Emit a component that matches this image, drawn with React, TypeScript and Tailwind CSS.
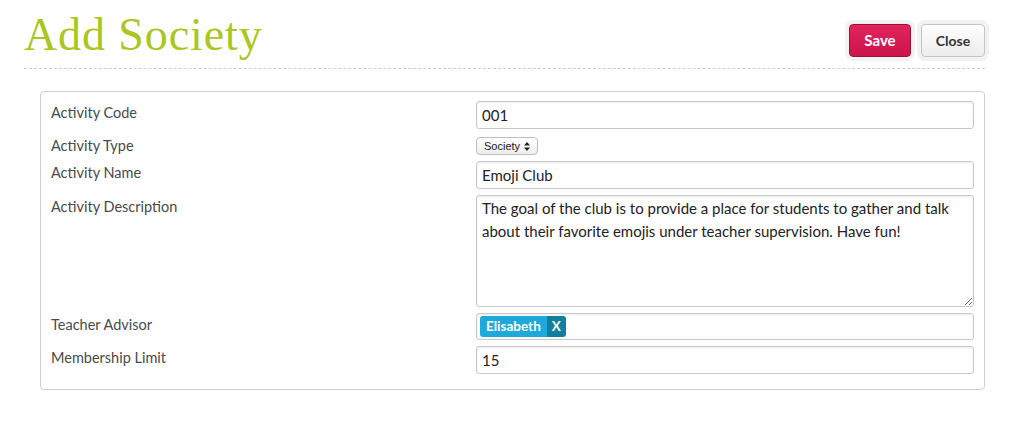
import { useState } from "react";

const labelCls = "text-[14.5px] leading-[20px] text-[#4a4a4a]";
const inputCls =
  "h-[28px] w-full rounded-[3px] border border-[#c8c8c8] bg-white px-[5px] text-[15px] text-[#222] shadow-[inset_0_1px_2px_rgba(0,0,0,0.08)] outline-none";

export default function App() {
  const [code, setCode] = useState("001");
  const [name, setName] = useState("Emoji Club");
  const [desc, setDesc] = useState(
    "The goal of the club is to provide a place for students to gather and talk about their favorite emojis under teacher supervision. Have fun!"
  );
  const [limit, setLimit] = useState("15");

  return (
    <div className="min-h-screen bg-white font-['Lato','Open_Sans',sans-serif]">
      <div className="pl-[24px] pr-[36px]">
        <div className="flex items-start justify-between border-b border-dashed border-[#cfcfcf] pb-[7px]">
          <h1 className="mt-[9px] font-['Liberation_Serif',serif] text-[46px] leading-[52px] tracking-[0.9px] text-[#abc623]">
            Add Society
          </h1>
          <div className="mt-[24px] flex gap-[10px]">
            <button className="h-[33px] w-[62px] rounded-[4px] border border-[#9e1038] bg-gradient-to-b from-[#e3235f] to-[#cc144c] text-[15px] font-bold text-white shadow-[0_0_0_4px_#f2f2f2]">
              Save
            </button>
            <button className="h-[33px] w-[64px] rounded-[4px] border border-[#c4c4c4] bg-gradient-to-b from-white to-[#ececec] text-[14px] font-bold text-[#333] shadow-[0_0_0_4px_#f2f2f2]">
              Close
            </button>
          </div>
        </div>
      </div>

      <div className="ml-[40px] mr-[36px] mt-[22px] rounded-[4px] border border-[#cfcfcf] px-[10px] pb-[15px] pt-[9px]">
        <div className="grid grid-cols-[425px_1fr] gap-y-[6px]">
          <div className={`${labelCls} pt-[2px]`}>Activity Code</div>
          <input className={inputCls} value={code} onChange={(e) => setCode(e.target.value)} />

          <div className="mt-[2px] text-[14.5px] leading-[18px] text-[#4a4a4a]">Activity Type</div>
          <div className="flex items-start pt-[2px]">
            <div className="flex h-[18px] items-center gap-[3px] rounded-[4px] border border-[#bdbdbd] bg-gradient-to-b from-white to-[#eeeeee] px-[7px] font-['Liberation_Sans',sans-serif] text-[11px] leading-[16px] text-[#222]">
              Society
              <svg width="6" height="9" viewBox="0 0 6 9" className="ml-[1px]">
                <path d="M3 0 L6 3.5 L0 3.5 Z M3 9 L6 5.5 L0 5.5 Z" fill="#222" />
              </svg>
            </div>
          </div>

          <div className={`${labelCls} pt-[2px]`}>Activity Name</div>
          <input className={inputCls} value={name} onChange={(e) => setName(e.target.value)} />

          <div className={`${labelCls} pt-[2px]`}>Activity Description</div>
          <textarea
            className="h-[112px] w-full resize-y rounded-[3px] border border-[#c8c8c8] bg-white px-[5px] pt-[1px] text-[15px] leading-[23px] text-[#222] shadow-[inset_0_1px_2px_rgba(0,0,0,0.08)] outline-none"
            value={desc}
            onChange={(e) => setDesc(e.target.value)}
          />

          <div className={`${labelCls} pt-[2px]`}>Teacher Advisor</div>
          <div className="flex h-[27px] items-center rounded-[3px] border border-[#c8c8c8] bg-white px-[3px] shadow-[inset_0_1px_2px_rgba(0,0,0,0.08)]">
            <span className="flex h-[21px] overflow-hidden rounded-[3px] text-[13.5px] font-bold text-white">
              <span className="flex items-center bg-[#1da9d9] px-[6px]">Elisabeth</span>
              <span className="flex items-center bg-[#137f9f] px-[5px]">X</span>
            </span>
          </div>

          <div className={`${labelCls} pt-[2px]`}>Membership Limit</div>
          <input className={inputCls} value={limit} onChange={(e) => setLimit(e.target.value)} />
        </div>
      </div>
    </div>
  );
}
